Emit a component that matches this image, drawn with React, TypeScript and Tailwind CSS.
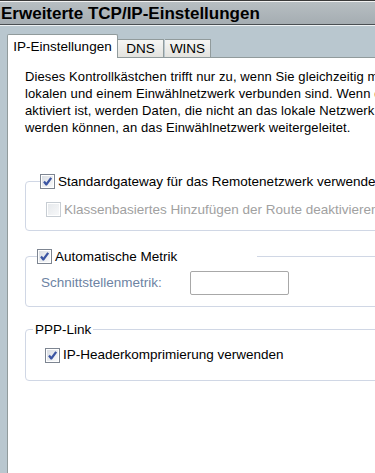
import React from 'react';

function CheckBox({ checked = false, disabled = false }: { checked?: boolean; disabled?: boolean }) {
  const border = disabled ? '#c7cdd3' : '#7d8591';
  return (
    <svg width="15" height="15" viewBox="0 0 15 15" className="shrink-0">
      <defs>
        <linearGradient id={disabled ? 'cbd' : 'cb'} x1="0" y1="0" x2="1" y2="1">
          <stop offset="0" stopColor={disabled ? '#e6e9ec' : '#d9dde3'} />
          <stop offset="1" stopColor={disabled ? '#f7f8f9' : '#f9fafb'} />
        </linearGradient>
      </defs>
      <rect x="0.5" y="0.5" width="14" height="14" fill="#fff" stroke={border} />
      <rect x="2" y="2" width="11" height="11" fill={`url(#${disabled ? 'cbd' : 'cb'})`} />
      {checked && (
        <path d="M4 7.5 L6.3 10.5 L11.2 3.8" fill="none" stroke="#3b55a3" strokeWidth="2.2" strokeLinejoin="round" />
      )}
    </svg>
  );
}

export default function App() {
  return (
    <div className="w-[375px] h-[473px] overflow-hidden flex flex-col bg-[#b9c7cf] text-black font-['Liberation_Sans',Arial,sans-serif]">
      {/* top edge */}
      <div className="h-px bg-[#3a3a3a]" />
      <div className="h-px bg-[#f2f2f2]" />
      {/* title */}
      <div className="h-[23px] flex items-center bg-gradient-to-b from-[#b7bec2] to-[#a5adb2] border-b border-[#4a4f53]">
        <span className="pl-px text-[17px] font-bold leading-none">Erweiterte TCP/IP-Einstellungen</span>
      </div>
      <div className="h-px bg-[#eef2f4]" />

      <div className="flex-1 flex flex-col pl-[7px] pt-[8px]">
        {/* tabs */}
        <div className="flex items-end text-[13.5px] leading-none">
          <div className="relative z-10 -mb-px h-[24px] w-[111px] flex items-center justify-center bg-white border border-b-0 border-[#919b9c] rounded-t-[2px]">
            IP-Einstellungen
          </div>
          <div className="h-[18px] w-[46px] flex items-center justify-center bg-gradient-to-b from-[#f6f6f4] to-[#e3e3df] border border-b-0 border-l-0 border-[#919b9c]">
            DNS
          </div>
          <div className="h-[18px] w-[46px] flex items-center justify-center bg-gradient-to-b from-[#f6f6f4] to-[#e3e3df] border border-b-0 border-l-0 border-[#919b9c] ml-px">
            WINS
          </div>
        </div>

        {/* panel */}
        <div className="flex-1 bg-white border-l border-t border-[#919b9c] pl-[17px] overflow-hidden text-[13px]">
          <p className="mt-[10px] leading-[17px] whitespace-nowrap tracking-[0.1px]">
            Dieses Kontrollkästchen trifft nur zu, wenn Sie gleichzeitig mit dem
            <br />
            lokalen und einem Einwählnetzwerk verbunden sind. Wenn diese Option
            <br />
            aktiviert ist, werden Daten, die nicht an das lokale Netzwerk gesendet
            <br />
            werden können, an das Einwählnetzwerk weitergeleitet.
          </p>

          <fieldset className="mt-[38px] w-[400px] h-[57px] border border-[#d0d7e5] rounded-[4px]">
            <legend className="ml-[14px] flex items-center gap-[3px] whitespace-nowrap leading-none text-[13.5px]">
              <CheckBox checked />
              <span>Standardgateway für das Remotenetzwerk verwenden</span>
            </legend>
            <div className="mt-[13px] ml-[20px] flex items-center gap-[3px] text-[#a1a1a1] whitespace-nowrap leading-none text-[13.5px]">
              <CheckBox disabled />
              <span>Klassenbasiertes Hinzufügen der Route deaktivieren</span>
            </div>
          </fieldset>

          <fieldset className="mt-[18px] w-[400px] h-[58px] border border-[#d0d7e5] rounded-[4px]">
            <legend className="ml-[11px] w-[220px] flex items-center gap-[3px] whitespace-nowrap leading-none text-[13.5px]">
              <CheckBox checked />
              <span>Automatische Metrik</span>
            </legend>
            <div className="mt-[7px] ml-[15px] flex items-center text-[13.5px]">
              <span className="w-[149px] text-[#6d83a3] leading-none">Schnittstellenmetrik:</span>
              <div className="w-[99px] h-[24px] border border-[#a8a8a8] rounded-[2px] bg-white" />
            </div>
          </fieldset>

          <fieldset className="mt-[16px] w-[400px] h-[58px] border border-[#d0d7e5] rounded-[4px]">
            <legend className="ml-[7px] px-[2px] leading-none text-[13.5px]">PPP-Link</legend>
            <div className="mt-[11px] ml-[19px] flex items-center gap-[3px] whitespace-nowrap leading-none text-[13.5px]">
              <CheckBox checked />
              <span>IP-Headerkomprimierung verwenden</span>
            </div>
          </fieldset>
        </div>
      </div>
    </div>
  );
}
